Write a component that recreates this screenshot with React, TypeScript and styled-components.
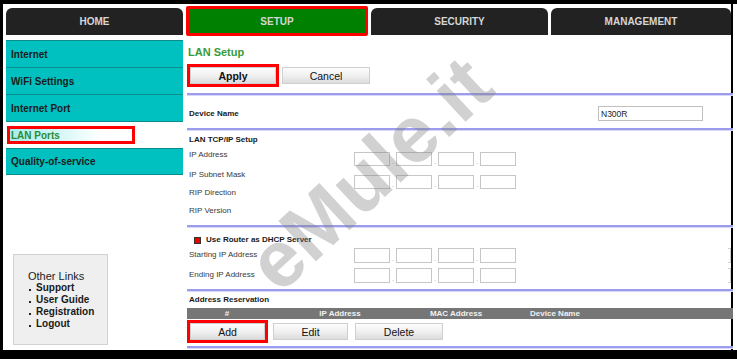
import React from "react";
import styled, { createGlobalStyle } from "styled-components";

const FONT = `"Liberation Sans", Arial, sans-serif`;

const GlobalStyle = createGlobalStyle`
  html, body { margin: 0; padding: 0; background: #fff; }
  body { font-family: ${FONT}; }
  * { box-sizing: border-box; }
`;

const Frame = styled.div`
  position: relative;
  width: 737px;
  height: 359px;
  border-top: 4px solid #000;
  border-left: 3px solid #000;
  border-bottom: 9px solid #000;
  padding-right: 4px;
  background: #fff;
  overflow: hidden;
`;

const Inner = styled.div`
  height: 100%;
  border-right: 2px solid #000;
  padding-left: 3px;
  display: flex;
  flex-direction: column;
`;

const TabRow = styled.div`
  display: flex;
  gap: 3px;
  align-items: flex-start;
  padding-top: 2px;
  height: 32px;
  flex-shrink: 0;
`;

const Tab = styled.div<{ $w: number; $active?: boolean }>`
  width: ${(p) => p.$w}px;
  height: ${(p) => (p.$active ? 30 : 27)}px;
  margin-top: ${(p) => (p.$active ? 0 : 2)}px;
  background: ${(p) => (p.$active ? "#008000" : "#222")};
  border: ${(p) => (p.$active ? "3px solid #f00" : "none")};
  border-radius: ${(p) => (p.$active ? "2px" : "6px 6px 0 0")};
  color: #d6d6d6;
  font: bold 10px ${FONT};
  display: flex;
  align-items: center;
  justify-content: center;
  flex-shrink: 0;
`;

const Body = styled.div`
  flex: 1;
  display: flex;
  min-height: 0;
`;

const Sidebar = styled.div`
  width: 177px;
  flex-shrink: 0;
  display: flex;
  flex-direction: column;
`;

const Menu = styled.div`
  margin-top: 4px;
  display: flex;
  flex-direction: column;
`;

const MenuItem = styled.div<{ $active?: boolean }>`
  height: 27px;
  border-top: 1px solid #088c8c;
  background: ${(p) => (p.$active ? "#fff" : "#00c0c0")};
  display: flex;
  align-items: center;
  padding-left: ${(p) => (p.$active ? 1 : 5)}px;
  font: bold 10px ${FONT};
  color: #1c1c1c;
  &:last-child {
    border-bottom: 1px solid #088c8c;
  }
`;

const ActiveLabel = styled.div`
  width: 128px;
  height: 18px;
  border: 3px solid #f00;
  background: linear-gradient(to right, #a6eded, #ffffff 75%);
  color: #2e8b2e;
  display: flex;
  align-items: center;
  padding-left: 1px;
`;

const OtherLinks = styled.div`
  margin-top: auto;
  margin-left: 7px;
  margin-bottom: 5px;
  width: 95px;
  height: 91px;
  background: #efefef;
  border: 1px solid #d2d2d2;
  padding: 15px 0 0 14px;
  font: bold 10px ${FONT};
  color: #1a1a1a;
  line-height: 12px;
`;

const LinksTitle = styled.div`
  font-weight: normal;
  font-size: 11px;
  color: #222;
`;

const LinkItem = styled.div`
  display: flex;
  align-items: center;
`;

const Bullet = styled.span`
  display: inline-block;
  width: 2px;
  height: 2px;
  background: #222;
  margin: 3px 5px 0 1px;
`;

const Main = styled.div`
  flex: 1;
  padding-left: 4px;
  display: flex;
  flex-direction: column;
  min-width: 0;
`;

const Title = styled.div`
  margin-top: 9px;
  padding-left: 1px;
  font: bold 11px ${FONT};
  line-height: 14px;
  color: #3a9a3a;
`;

const ButtonRow = styled.div<{ $mt: number }>`
  margin-top: ${(p) => p.$mt}px;
  display: flex;
  align-items: center;
  height: 23px;
`;

const RedFrame = styled.div`
  border: 3px solid #f00;
  display: flex;
`;

const Button = styled.div<{ $w: number; $bold?: boolean; $ml?: number }>`
  width: ${(p) => p.$w}px;
  height: 17px;
  margin-left: ${(p) => p.$ml ?? 0}px;
  background: linear-gradient(to bottom, #fdfdfd, #f0f0f0 50%, #dcdcdc);
  border: 1px solid #cfcfcf;
  display: flex;
  align-items: center;
  justify-content: center;
  font: ${(p) => (p.$bold ? "bold" : "normal")} 10.5px ${FONT};
  color: #111;
`;

const Divider = styled.div<{ $mt?: number }>`
  margin-top: ${(p) => p.$mt ?? 0}px;
  height: 2px;
  background: #9c9cec;
  box-shadow: 0 1px 0 #d8d8f8;
  margin-right: -2px;
  flex-shrink: 0;
`;

const Section = styled.div<{ $pt: number; $pb: number }>`
  padding: ${(p) => p.$pt}px 0 ${(p) => p.$pb}px 2px;
  display: flex;
  flex-direction: column;
`;

const Row = styled.div<{ $h: number; $align?: string }>`
  height: ${(p) => p.$h}px;
  display: flex;
  align-items: ${(p) => p.$align ?? "center"};
`;

const Label = styled.div<{ $bold?: boolean; $w?: number }>`
  width: ${(p) => (p.$w ? `${p.$w}px` : "auto")};
  flex: ${(p) => (p.$w ? "0 0 auto" : "1")};
  font: ${(p) => (p.$bold ? "bold" : "normal")} 8px ${FONT};
  line-height: 12px;
  color: ${(p) => (p.$bold ? "#1a1a1a" : "#3a3a3a")};
`;

const TextInput = styled.div`
  width: 105px;
  height: 15px;
  margin-right: 28px;
  border: 1px solid #c0c0c0;
  font: 8.5px ${FONT};
  color: #222;
  padding-left: 2px;
  display: flex;
  align-items: center;
`;

const IpGroup = styled.div<{ $mt?: number }>`
  display: flex;
  align-items: flex-end;
  margin-top: ${(p) => p.$mt ?? 0}px;
`;

const IpBox = styled.div<{ $h?: number }>`
  width: 36px;
  height: ${(p) => p.$h ?? 14}px;
  border: 1px solid #c6c6c6;
  background: #fff;
`;

const Dot = styled.span`
  width: 6px;
  text-align: center;
  font: 8px ${FONT};
  color: #aaa;
  line-height: 8px;
`;

const EdgeStub = styled.div`
  margin-left: auto;
  width: 3px;
  height: 15px;
  border: 1px solid #cfcfcf;
  border-left: none;
`;

const CheckRow = styled.div`
  height: 12px;
  display: flex;
  align-items: center;
  padding-left: 5px;
`;

const CheckBox = styled.span`
  width: 7px;
  height: 7px;
  background: #e00;
  border: 1px solid #333;
  margin-right: 5px;
`;

const TableHead = styled.div`
  margin-top: 2px;
  margin-right: -2px;
  height: 11px;
  background: #767676;
  display: grid;
  grid-template-columns: 80px 146px 86px 112px;
  align-items: center;
  font: bold 8px ${FONT};
  color: #f2f2f2;
  text-align: center;
`;

const Watermark = styled.div`
  position: absolute;
  left: 367px;
  top: 170px;
  transform: translate(-50%, -50%) rotate(-43deg);
  font: bold 80px ${FONT};
  color: rgba(128, 128, 128, 0.36);
  white-space: nowrap;
  pointer-events: none;
`;

const tabs = [
  { label: "HOME", w: 177 },
  { label: "SETUP", w: 182, active: true },
  { label: "SECURITY", w: 177 },
  { label: "MANAGEMENT", w: 180 },
];

const menu = ["Internet", "WiFi Settings", "Internet Port", "LAN Ports", "Quality-of-service"];

const Ip: React.FC<{ h?: number; mt?: number }> = ({ h, mt }) => (
  <IpGroup $mt={mt}>
    <IpBox $h={h} />
    <Dot>.</Dot>
    <IpBox $h={h} />
    <Dot>.</Dot>
    <IpBox $h={h} />
    <Dot>.</Dot>
    <IpBox $h={h} />
  </IpGroup>
);

export default function App() {
  return (
    <>
      <GlobalStyle />
      <Frame>
        <Inner>
          <TabRow>
            {tabs.map((t) => (
              <Tab key={t.label} $w={t.w} $active={t.active}>
                {t.label}
              </Tab>
            ))}
          </TabRow>
          <Body>
            <Sidebar>
              <Menu>
                {menu.map((m) =>
                  m === "LAN Ports" ? (
                    <MenuItem key={m} $active>
                      <ActiveLabel>{m}</ActiveLabel>
                    </MenuItem>
                  ) : (
                    <MenuItem key={m}>{m}</MenuItem>
                  )
                )}
              </Menu>
              <OtherLinks>
                <LinksTitle>Other Links</LinksTitle>
                {["Support", "User Guide", "Registration", "Logout"].map((l) => (
                  <LinkItem key={l}>
                    <Bullet />
                    {l}
                  </LinkItem>
                ))}
              </OtherLinks>
            </Sidebar>
            <Main>
              <Title>LAN Setup</Title>
              <ButtonRow $mt={5}>
                <RedFrame>
                  <Button $w={86} $bold>
                    Apply
                  </Button>
                </RedFrame>
                <Button $w={88} $ml={3}>
                  Cancel
                </Button>
              </ButtonRow>
              <Divider $mt={6} />
              <Section $pt={11} $pb={7}>
                <Row $h={15}>
                  <Label $bold>Device Name</Label>
                  <TextInput>N300R</TextInput>
                </Row>
              </Section>
              <Divider />
              <Section $pt={4} $pb={8}>
                <Label $bold>LAN TCP/IP Setup</Label>
                <Row $h={20} $align="flex-start" style={{ marginTop: 3 }}>
                  <Label $w={165}>IP Address</Label>
                  <Ip mt={3} />
                </Row>
                <Row $h={18} $align="flex-start">
                  <Label $w={165}>IP Subnet Mask</Label>
                  <Ip mt={6} />
                </Row>
                <Row $h={18} $align="flex-start">
                  <Label $w={165}>RIP Direction</Label>
                </Row>
                <Row $h={12} $align="flex-start">
                  <Label $w={165}>RIP Version</Label>
                </Row>
              </Section>
              <Divider />
              <Section $pt={7} $pb={6}>
                <CheckRow>
                  <CheckBox />
                  <Label $bold>Use Router as DHCP Server</Label>
                </CheckRow>
                <Row $h={20} style={{ marginTop: 2 }} $align="flex-start">
                  <Label $w={165} style={{ marginTop: 1 }}>Starting IP Address</Label>
                  <Ip h={15} />
                  <EdgeStub />
                </Row>
                <Row $h={15} $align="flex-start">
                  <Label $w={165} style={{ marginTop: 1 }}>Ending IP Address</Label>
                  <Ip h={15} />
                  <EdgeStub />
                </Row>
              </Section>
              <Divider />
              <Section $pt={3} $pb={0}>
                <Label $bold>Address Reservation</Label>
              </Section>
              <TableHead>
                <span>#</span>
                <span>IP Address</span>
                <span>MAC Address</span>
                <span>Device Name</span>
              </TableHead>
              <ButtonRow $mt={1}>
                <RedFrame>
                  <Button $w={75}>Add</Button>
                </RedFrame>
                <Button $w={75} $ml={5}>
                  Edit
                </Button>
                <Button $w={88} $ml={7}>
                  Delete
                </Button>
              </ButtonRow>
              <Divider $mt={3} />
            </Main>
          </Body>
        </Inner>
        <Watermark>eMule.it</Watermark>
      </Frame>
    </>
  );
}
